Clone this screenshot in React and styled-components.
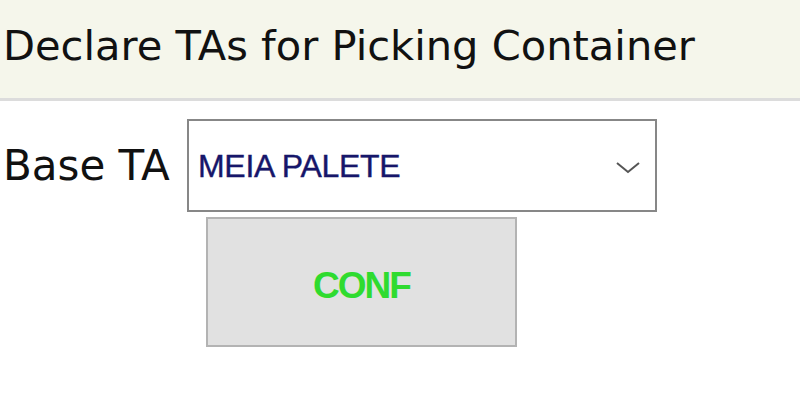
import React from "react";
import styled, { createGlobalStyle } from "styled-components";

const Global = createGlobalStyle`
  html, body {
    margin: 0;
    padding: 0;
    background: #ffffff;
  }
`;

const Page = styled.div`
  width: 800px;
  height: 405px;
  overflow: hidden;
  font-family: "DejaVu Sans", Verdana, sans-serif;
`;

const Header = styled.div`
  height: 98px;
  background: #f5f6eb;
  border-bottom: 3px solid #dcdcdc;
  display: flex;
  align-items: center;
  padding-left: 3px;
  box-sizing: content-box;
`;

const Title = styled.h1`
  margin: 0;
  margin-top: -8px;
  font-size: 41.6px;
  font-weight: normal;
  color: #111111;
`;

const Row = styled.div`
  display: flex;
  align-items: center;
  margin-top: 18px;
  padding-left: 3px;
`;

const Label = styled.span`
  font-size: 42px;
  color: #111111;
  width: 184px;
`;

const Select = styled.div`
  width: 470px;
  height: 93px;
  box-sizing: border-box;
  border: 2px solid #878787;
  background: #ffffff;
  display: flex;
  align-items: center;
  justify-content: space-between;
  padding: 2px 14px 0 9px;
`;

const Value = styled.span`
  font-family: "Liberation Sans", Arial, sans-serif;
  font-size: 32px;
  color: #16166a;
  -webkit-text-stroke: 0.4px #16166a;
  letter-spacing: -0.3px;
`;

const Button = styled.button`
  margin: 5px 0 0 206px;
  width: 311px;
  height: 130px;
  box-sizing: border-box;
  border: 2px solid #b3b3b3;
  background: #e1e1e1;
  color: #2fdb2f;
  font-family: "Liberation Sans", Arial, sans-serif;
  font-weight: bold;
  font-size: 37px;
  letter-spacing: -2px;
  padding: 8px 0 0 0;
  display: block;
`;

const Chevron = () => (
  <svg width="26" height="16" viewBox="0 0 26 16">
    <path d="M2 4 L13 13 L24 4" fill="none" stroke="#555555" strokeWidth="2" />
  </svg>
);

export default function App() {
  return (
    <Page>
      <Global />
      <Header>
        <Title>Declare TAs for Picking Container</Title>
      </Header>
      <Row>
        <Label>Base TA</Label>
        <Select>
          <Value>MEIA PALETE</Value>
          <Chevron />
        </Select>
      </Row>
      <Button>CONF</Button>
    </Page>
  );
}
